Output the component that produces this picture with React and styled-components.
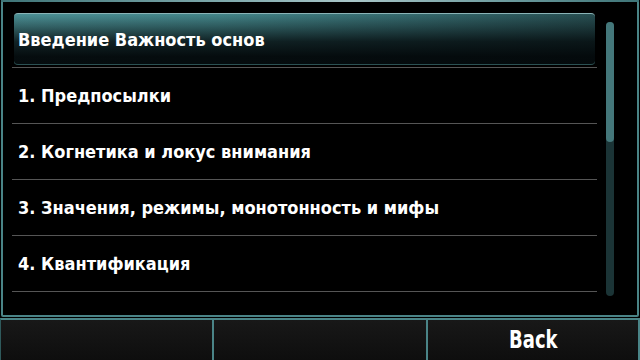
import React from "react";
import styled, { createGlobalStyle } from "styled-components";

const Global = createGlobalStyle`
  html, body { margin: 0; padding: 0; background: #000; }
  body { width: 640px; height: 360px; overflow: hidden; }
  #root { width: 640px; height: 360px; }
`;

const Screen = styled.div`
  width: 640px;
  height: 360px;
  background: #000;
  display: flex;
  flex-direction: column;
  font-family: "DejaVu Sans Condensed", "DejaVu Sans", sans-serif;
  color: #fff;
`;

const Panel = styled.div`
  position: relative;
  box-sizing: border-box;
  margin: 0 1px 0 1px;
  height: 317px;
  border: 2px solid #4a8487;
  border-top-width: 1px;
  border-radius: 0 0 2px 2px;
  display: flex;
  padding: 11px 0 0 9px;
  &::before {
    content: "";
    position: absolute;
    left: -2px;
    right: -2px;
    top: -1px;
    height: 2px;
    background: linear-gradient(90deg, #3e7477 0%, #7fa9ac 35%, #a9c6c8 55%, #6b9a9d 80%, #3e7477 100%);
  }
`;

const List = styled.ul`
  list-style: none;
  margin: 0;
  padding: 0;
  width: 585px;
  flex: none;
`;

const Row = styled.li`
  position: relative;
  height: 55px;
  border-bottom: 1px solid #555;
  display: flex;
  align-items: center;
  padding-left: 6px;
  font-size: 18px;
  font-weight: bold;
  white-space: nowrap;
`;

const Highlight = styled.div`
  position: absolute;
  left: 2px;
  right: 2px;
  top: 1px;
  bottom: 2px;
  border-radius: 4px;
  border-top: 1px solid #8ab4b7;
  border-bottom: 1px solid #2b5153;
  background:
    linear-gradient(180deg, rgba(3,8,10,0) 0%, rgba(3,8,10,0.35) 25%, rgba(3,8,10,0.8) 55%, rgba(3,8,10,0.97) 85%),
    linear-gradient(90deg, #4d9297 0%, #44868a 35%, #35696d 70%, #284f52 100%);
`;

const Label = styled.span`
  position: relative;
`;

const ScrollTrack = styled.div`
  margin: 10px 0 0 9px;
  width: 8px;
  height: 274px;
  border-radius: 4px;
  background: #1b3436;
  display: flex;
  flex-direction: column;
`;

const ScrollThumb = styled.div`
  height: 120px;
  border-radius: 4px;
  background: #44777a;
`;

const SoftBar = styled.div`
  margin-top: 1px;
  flex: 1;
  display: grid;
  grid-template-columns: 211px 2px 212px 2px 1fr;
  border-top: 2px solid #4a8487;
  border-left: 1px solid #2f5a5c;
  border-right: 2px solid #4a8487;
  background: linear-gradient(180deg, #181818 0%, #0e0e0e 100%);
`;

const SoftDivider = styled.div`
  background: #4a8487;
`;

const SoftKey = styled.div`
  display: flex;
  align-items: center;
  justify-content: center;
  padding-bottom: 1px;
`;

const SoftLabel = styled.span`
  display: inline-block;
  font-size: 25px;
  font-weight: bold;
  color: #fff;
  transform: scaleX(0.8);
`;

const items = [
  "Введение Важность основ",
  "1. Предпосылки",
  "2. Когнетика и локус внимания",
  "3. Значения, режимы, монотонность и мифы",
  "4. Квантификация",
];

export default function App() {
  return (
    <>
      <Global />
      <Screen>
        <Panel>
          <List>
            {items.map((t, i) => (
              <Row key={i}>
                {i === 0 && <Highlight />}
                <Label>{t}</Label>
              </Row>
            ))}
          </List>
          <ScrollTrack>
            <ScrollThumb />
          </ScrollTrack>
        </Panel>
        <SoftBar>
          <SoftKey />
          <SoftDivider />
          <SoftKey />
          <SoftDivider />
          <SoftKey>
            <SoftLabel>Back</SoftLabel>
          </SoftKey>
        </SoftBar>
      </Screen>
    </>
  );
}
